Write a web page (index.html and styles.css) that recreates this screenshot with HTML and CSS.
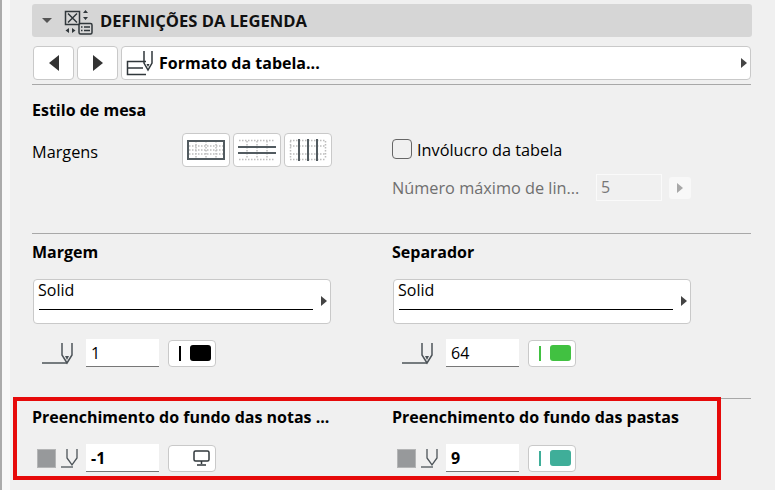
FILE: index.html
```html
<!DOCTYPE html>
<html lang="pt">
<head>
<meta charset="utf-8">
<title>Definições da legenda</title>
<link rel="stylesheet" href="styles.css">
</head>
<body>
<div class="app">
  <div class="edge"></div>
  <main class="panel">
    <header class="head">
      <span class="caret"></span>
      <svg class="head-icon" width="30" height="26" viewBox="0 0 30 26" fill="none" stroke="#30373b" stroke-width="1.500">
        <path d="M1.500 2.500h14v13H1.500z"/>
        <path d="M4 4.500l9 9M13 4.500l-9 9"/>
        <path d="M21.500 1l-2.500 3h5zM21.500 11l-2.500-3h5z" fill="#30373b" stroke="none"/>
        <rect x="15" y="14.500" width="13" height="10.500" rx="1.500" fill="#d6d6d6"/>
        <path d="M17 18h1.500M20 18h6M17 21.500h1.500M20 21.500h6"/>
        <path d="M5 19l-3.500 2.500 3.500 2.500zM8 19l3.500 2.500-3.500 2.500z" fill="#30373b" stroke="none"/>
      </svg>
      <span class="head-title">DEFINIÇÕES DA LEGENDA</span>
    </header>

    <div class="toolbar">
      <button class="nav"><span class="tri tri-left"></span></button>
      <button class="nav"><span class="tri tri-right"></span></button>
      <div class="format">
        <svg class="format-icon" width="29" height="25" viewBox="0 0 29 25" fill="none" stroke="#30373b" stroke-width="1.500">
          <path d="M20 10.500H1.500v13H20M1.500 17H17"/>
          <path d="M18 0v12l4 7 4-7V0"/>
          <path d="M20.500 13h3l-1.500 3z" fill="#30373b" stroke="none"/>
        </svg>
        <span class="format-text">Formato da tabela...</span>
        <span class="arrow arrow-end"></span>
      </div>
    </div>
    <hr class="rule rule-top">

    <section class="cols style-section">
      <div>
        <h2 class="label">Estilo de mesa</h2>
        <div class="margins">
          <span class="text">Margens</span>
          <div class="border-btns">
            <button class="border-btn">
              <svg width="38" height="22" viewBox="0 0 38 22"><path class="dots" d="M2 7h34M2 11h34M2 15h34M9 2v18M19 2v18M29 2v18"/><rect class="bar" x="1" y="2" width="36" height="18" fill="none"/></svg>
            </button>
            <button class="border-btn">
              <svg width="38" height="22" viewBox="0 0 38 22"><path class="dots" d="M1 1.500h36M1 20.500h36M9 2v18M19 2v18M29 2v18"/><path class="bar" d="M0 8h38M0 14h38"/></svg>
            </button>
            <button class="border-btn">
              <svg width="38" height="22" viewBox="0 0 38 22"><path class="dots" d="M1 1.500h36M1 20.500h36M1 7h36M1 15h36M1.500 2v18M36.500 2v18"/><path class="bar" d="M10 0v22M19 0v22M28 0v22"/></svg>
            </button>
          </div>
        </div>
      </div>
      <div class="wrap-col">
        <label class="check-row"><span class="check"></span><span class="text">Invólucro da tabela</span></label>
        <div class="max-row">
          <span class="text muted">Número máximo de lin...</span>
          <span class="num-off">5</span>
          <span class="step-off"><span class="arrow arrow-off"></span></span>
        </div>
      </div>
    </section>
    <hr class="rule rule-mid">

    <section class="cols line-section">
      <div>
        <h2 class="label">Margem</h2>
        <div class="line-select">
          <span class="line-name">Solid</span>
          <span class="line-sample"></span>
          <span class="arrow arrow-line"></span>
        </div>
        <div class="pen-row">
          <svg class="pen-wide" width="33" height="23" viewBox="0 0 33 23" fill="none" stroke="#4d5459" stroke-width="1.500"><path d="M1 21h25"/><path d="M21 1v12l5 8 5-8V1"/><path d="M24 14h4l-2 4z" fill="#4d5459" stroke="none"/></svg>
          <span class="num">1</span>
          <button class="color"><span class="color-bar black"></span><span class="swatch black"></span></button>
        </div>
      </div>
      <div>
        <h2 class="label">Separador</h2>
        <div class="line-select">
          <span class="line-name">Solid</span>
          <span class="line-sample"></span>
          <span class="arrow arrow-line"></span>
        </div>
        <div class="pen-row">
          <svg class="pen-wide" width="33" height="23" viewBox="0 0 33 23" fill="none" stroke="#4d5459" stroke-width="1.500"><path d="M1 21h25"/><path d="M21 1v12l5 8 5-8V1"/><path d="M24 14h4l-2 4z" fill="#4d5459" stroke="none"/></svg>
          <span class="num">64</span>
          <button class="color"><span class="color-bar green"></span><span class="swatch green"></span></button>
        </div>
      </div>
    </section>
    <hr class="rule rule-low">

    <section class="cols fill-section">
      <div>
        <h2 class="label">Preenchimento do fundo das notas ...</h2>
        <div class="fill-row">
          <span class="gray-box"></span>
          <svg class="pen-small" width="18" height="20" viewBox="0 0 18 20" fill="none" stroke="#4d5459" stroke-width="1.300"><path d="M0 19h12"/><path d="M6 1v9l5 7 5-7V1"/></svg>
          <span class="num bold">-1</span>
          <button class="color">
            <svg class="monitor" width="17" height="16" viewBox="0 0 17 16" fill="none" stroke="#30373b" stroke-width="1.500"><rect x="1" y="1" width="15" height="10" rx="1.500"/><path d="M8.500 11v3M4 15h9"/></svg>
          </button>
        </div>
      </div>
      <div>
        <h2 class="label">Preenchimento do fundo das pastas</h2>
        <div class="fill-row">
          <span class="gray-box"></span>
          <svg class="pen-small" width="18" height="20" viewBox="0 0 18 20" fill="none" stroke="#4d5459" stroke-width="1.300"><path d="M0 19h12"/><path d="M6 1v9l5 7 5-7V1"/></svg>
          <span class="num bold">9</span>
          <button class="color"><span class="color-bar teal"></span><span class="swatch teal"></span></button>
        </div>
      </div>
    </section>
  </main>
  <div class="highlight"></div>
</div>
</body>
</html>
```

FILE: styles.css
```css
* { box-sizing: border-box; }
html, body { margin: 0; height: 100%; overflow: hidden; }
body {
  background: #f0f0f0;
  color: #000;
  font-family: "Open Sans", "Noto Sans", "Liberation Sans", sans-serif;
  font-size: 16px;
}
.app { position: relative; display: flex; width: 775px; height: 490px; }
.edge { width: 10px; flex: none; background: #f8f8f8; border-left: 2px solid #ababab; }
.panel { width: 742px; padding: 4px 0 0 22px; }

.head {
  display: flex; align-items: center;
  height: 33px; width: 720px;
  background: #d6d6d6; border-radius: 3px;
}
.caret {
  margin-left: 10px;
  border-left: 5px solid transparent; border-right: 5px solid transparent;
  border-top: 5px solid #555;
}
.head-icon { margin-left: 12px; margin-top: 2px; }
.head-title { margin-left: 6px; font-weight: 700; font-size: 16.6px; color: #111; }

.toolbar { display: flex; gap: 3px; margin: 9px 1px 0 1px; height: 34px; }
button { font: inherit; padding: 0; }
.nav, .format, .border-btn, .color, .line-select {
  background: #fff; border: 1px solid #c9c9c9; border-radius: 4px;
}
.nav { width: 41px; display: flex; align-items: center; justify-content: center; }
.tri { display: block; border-top: 8px solid transparent; border-bottom: 8px solid transparent; }
.tri-left { border-right: 10px solid #333; }
.tri-right { border-left: 10px solid #333; }
.format { flex: 1; display: flex; align-items: center; padding-left: 4px; }
.format-icon { margin-top: 1px; }
.format-text { margin-left: 4px; font-weight: 700; font-size: 16px; }
.arrow {
  display: block; width: 0;
  border-top: 5px solid transparent; border-bottom: 5px solid transparent;
  border-left: 6px solid #444;
}
.arrow-end { margin-left: auto; margin-right: 3px; }

.rule { margin: 0; border: 0; height: 1px; width: 719px; background: #a8a8a8; }
.rule-top { margin-top: 4px; }
.rule-mid { margin-top: 32px; }
.rule-low { margin-top: 31px; }

.cols { display: grid; grid-template-columns: 360px 359px; }
.label { margin: 0; font-size: 16px; font-weight: 700; line-height: 20px; color: #000; }
.text { font-size: 16.3px; line-height: 20px; }
.muted { color: #6f6f6f; }

.style-section { padding-top: 15px; }
.margins { display: flex; align-items: flex-start; margin-top: 13px; }
.margins .text { margin-top: 9px; width: 150px; }
.border-btns { display: flex; gap: 3px; }
.border-btn { width: 48px; height: 34px; display: flex; align-items: center; justify-content: center; }
.border-btn svg { display: block; }
.dots { stroke: #bdbdbd; stroke-width: 1.500; stroke-dasharray: 1.500 1.500; fill: none; }
.bar { stroke: #525b60; stroke-width: 2; fill: none; }

.wrap-col { padding-top: 39px; }
.check-row { display: flex; align-items: center; gap: 5px; height: 20px; }
.check-row .text { padding-top: 2px; }
.check { width: 20px; height: 20px; border: 1px solid #666; border-radius: 4px; }
.max-row { display: flex; align-items: center; margin-top: 15px; height: 27px; }
.max-row .text { width: 204px; white-space: nowrap; }
.num-off {
  width: 66px; height: 27px; padding-left: 4px;
  border: 1px solid #fafafa; color: #777; line-height: 25px;
}
.step-off {
  margin-left: 7px; width: 22px; height: 22px; border-radius: 3px;
  background: #f8f8f8; display: flex; align-items: center; justify-content: center;
}
.arrow-off { border-left-color: #a8a8a8; }

.line-section { padding-top: 8px; }
.line-select { position: relative; width: 298px; height: 45px; margin: 17px 0 0 1px; }
.line-name { display: block; margin-left: 4px; line-height: 20px; }
.line-sample { display: block; height: 1px; margin: 9px 0 0 5px; width: 274px; background: #000; }
.arrow-line { position: absolute; right: 3px; top: 16px; }
.pen-row { display: flex; align-items: center; margin-top: 15px; height: 28px; padding-left: 9px; }
.pen-wide { flex: none; }
.num {
  width: 73px; height: 28px; margin-left: 12px; padding-left: 5px;
  background: #fff; border-bottom: 1px solid #777;
  line-height: 29px; font-size: 16px;
}
.bold { font-weight: 700; }
.color {
  width: 48px; height: 27px; margin-left: 9px;
  display: flex; align-items: center;
}
.color-bar { width: 2px; height: 15px; margin-left: 10px; }
.swatch { width: 21px; height: 16px; margin-left: 9px; border-radius: 3px; }
.black { background: #000; }
.green { background: #41c141; }
.teal { background: #3fae99; }
.monitor { margin-left: 24px; }

.fill-section { padding-top: 8px; }
.fill-row { display: flex; align-items: center; margin-top: 17px; height: 28px; padding-left: 5px; }
.gray-box { width: 19px; height: 19px; background: #97999b; border: 1px solid #b4b5b6; flex: none; }
.pen-small { margin-left: 5px; flex: none; }
.fill-row .num { margin-left: 7px; }

.highlight {
  position: absolute; left: 13px; top: 397px;
  width: 708px; height: 83px;
  border: 4px solid #e60a0a;
  pointer-events: none;
}
```
